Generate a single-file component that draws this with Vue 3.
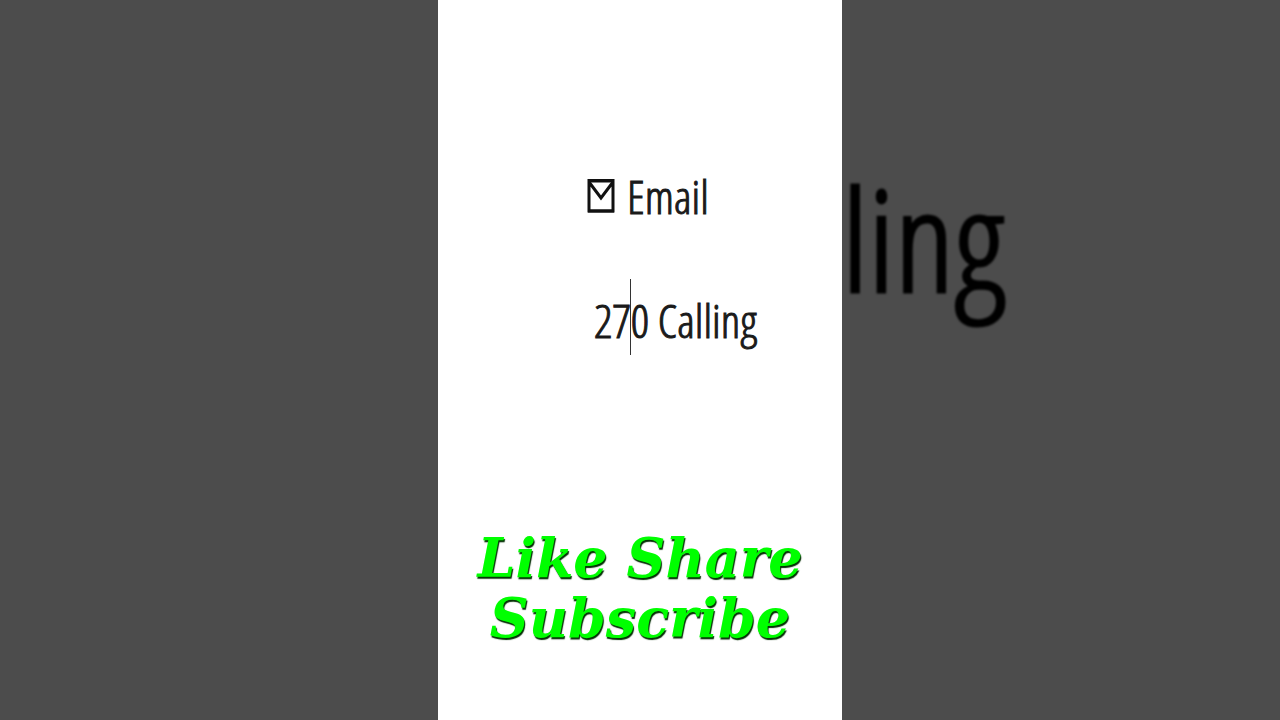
<script setup>
const slogan = ['Like Share', 'Subscribe']
</script>

<template>
  <main class="stage">
    <div class="side"></div>
    <section class="panel">
      <div class="email">
        <svg class="envelope" viewBox="0 0 28 36" aria-hidden="true">
          <path d="M2 2.5H26V33H2Z M2 4L14 20L26 4" />
          <path d="M1 3H27M1 33H27" />
        </svg>
        <span>Email</span>
      </div>
      <p class="calling">27<span class="caret"></span>0 Calling</p>
      <p class="slogan">
        <span v-for="line in slogan" :key="line">{{ line }}</span>
      </p>
    </section>
    <div class="side backdrop" aria-hidden="true">ling</div>
  </main>
</template>

<style>
body {
  margin: 0;
}
</style>

<style scoped>
.stage {
  display: grid;
  grid-template-columns: 1fr minmax(0, 404px) 1fr;
  min-height: 100vh;
  background: #4c4c4c;
  font-family: "Open Sans Condensed Light", "Open Sans", sans-serif;
}

.side {
  min-width: 0;
  overflow: hidden;
}

.backdrop {
  box-sizing: border-box;
  padding: 148px 0 0;
  color: #000;
  font-size: 140px;
  line-height: 180px;
  -webkit-text-stroke: 3px #000;
  filter: blur(1px);
}

.panel {
  box-sizing: border-box;
  padding-top: 160px;
  background: #fff;
  color: #1a1a1a;
  font-size: 46px;
  line-height: 72px;
  -webkit-text-stroke: 1px #1a1a1a;
}

.email {
  display: flex;
  align-items: center;
  gap: 12px;
  padding-left: 149px;
}

.envelope {
  width: 28px;
  height: 36px;
  fill: none;
  stroke: #111;
  stroke-width: 3;
}

.calling {
  margin: 52px 0 0;
  padding-left: 156px;
  white-space: nowrap;
}

.caret {
  display: inline-block;
  width: 1px;
  height: 76px;
  margin: -22px 0 -4px -1px;
  vertical-align: middle;
  background: #333;
}

.slogan {
  margin: 172px 0 0;
  color: #00ff00;
  font: italic bold 54px/60px "DejaVu Serif", serif;
  text-align: center;
  text-shadow: 1px 2px 1px #053005;
  -webkit-text-stroke: 0;
}

.slogan span {
  display: block;
  white-space: nowrap;
}
</style>
